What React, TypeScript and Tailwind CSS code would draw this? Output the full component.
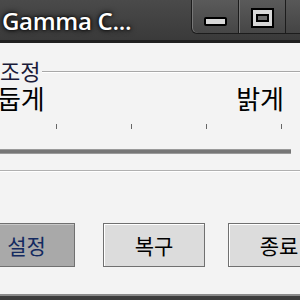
export default function App() {
  const ko = { fontFamily: '"Noto Sans CJK KR", "Noto Sans", sans-serif' };
  return (
    <div className="relative h-[300px] w-[300px] overflow-hidden bg-[#f3f3f3]">
      {/* title bar */}
      <div className="flex h-[43px] items-start border-b-[3px] border-[#1f1f1f] bg-gradient-to-b from-[#4a4a4a] to-[#3a3a3a]">
        <span
          className="ml-[2px] mt-[6px] flex-1 text-[24px] leading-[30px] font-semibold tracking-[-0.3px] text-white [text-shadow:0_0_3px_#000,0_0_6px_#000]"
          style={{ fontFamily: '"Open Sans", "Noto Sans", sans-serif' }}
        >
          Gamma C...
        </span>
        <div className="flex h-[34px]">
          <div className="flex w-[48px] items-center justify-center rounded-bl-[6px] border border-t-0 border-[#1c1c1c] bg-gradient-to-b from-[#5a5a5a] to-[#464646] shadow-[inset_1px_0_0_#777]">
            <span className="mt-[10px] h-[9px] w-[23px] rounded-[2px] border-2 border-black bg-[#d8d8d8]" />
          </div>
          <div className="flex w-[47px] items-center justify-center border-b border-r border-[#1c1c1c] bg-gradient-to-b from-[#5a5a5a] to-[#464646] shadow-[inset_1px_0_0_#777]">
            <span className="mt-[2px] flex h-[20px] w-[23px] items-center justify-center border-2 border-black bg-[#d8d8d8]">
              <span className="h-[8px] w-[13px] border-2 border-black bg-[#6a6a6a]" />
            </span>
          </div>
          <div className="w-[14px] border-b border-[#1c1c1c] bg-gradient-to-b from-[#585858] to-[#444]" />
        </div>
      </div>

      {/* body */}
      <div className="h-[251px]" style={ko}>
        {/* group box */}
        <div className="mt-[16px] flex items-center">
          <span className="text-[22px] leading-[22px] text-[#1a1a38]">조정</span>
          <span className="ml-[2px] mt-[4px] h-[2px] flex-1 border-t border-[#a8a8a8] bg-white" />
        </div>
        <div className="mt-[3px] flex justify-between pr-[16px] text-[26px] leading-[28px] text-black">
          <span className="-ml-[27px]">어둡게</span>
          <span>밝게</span>
        </div>
        <div className="mt-[12px] flex h-[6px] items-start pl-[56px]">
          {[0, 1, 2, 3].map((i) => (
            <div key={i} className="mr-[74px] h-[5px] w-px shrink-0 bg-[#666]" />
          ))}
        </div>
        <div className="mt-[19px] mr-[9px] h-[5px] border-y border-[#9a9a9a] bg-[#767676]" />
        <div className="mt-[16px] h-[2px] border-t border-[#b0b0b0] bg-white" />

        {/* buttons */}
        <div className="mt-[51px] flex text-[21px] leading-[24px] text-black">
          <button className="-ml-[27px] flex h-[44px] w-[102px] shrink-0 items-center justify-center border border-[#707070] bg-[#a9a9a9] shadow-[inset_1px_1px_0_#c8c8c8]">
            <span className="ml-[5px] text-[#142a60]">설정</span>
          </button>
          <button className="ml-[28px] flex h-[44px] w-[102px] shrink-0 items-center justify-center border border-[#707070] bg-[#dcdcdc] shadow-[inset_1px_1px_0_#fff]">
            복구
          </button>
          <button className="ml-[23px] flex h-[44px] w-[102px] shrink-0 items-center justify-center border border-[#707070] bg-[#dcdcdc] shadow-[inset_1px_1px_0_#fff]">
            종료
          </button>
        </div>
      </div>

      {/* bottom frame */}
      <div className="absolute bottom-0 left-0 h-[6px] w-full border-t-2 border-[#8a8a8a] bg-[#3c3c3c]" />
    </div>
  );
}
